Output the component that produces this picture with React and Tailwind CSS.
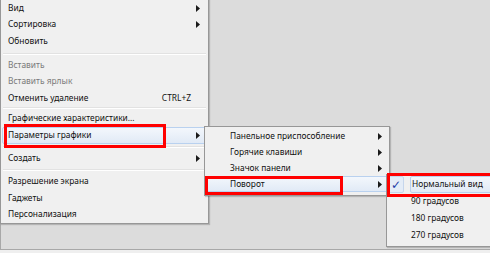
import React from 'react';

const font = { fontFamily: '"Noto Sans", "Open Sans", sans-serif' };

function Arrow() {
  return (
    <svg width="4" height="7" viewBox="0 0 4 7" className="shrink-0">
      <path d="M0 0L4 3.5L0 7Z" fill="#1a1a1a" />
    </svg>
  );
}

function Sep({ h }) {
  return (
    <div className={`${h} flex flex-col justify-center mx-[2px]`}>
      <div className="h-px bg-[#e2e2e2]" />
      <div className="h-px bg-white" />
    </div>
  );
}

function Item({ label, h, disabled, arrow, shortcut, active, pad }) {
  return (
    <div
      className={`${h} flex items-center justify-between rounded-[2px] border ${
        active
          ? 'border-[#b9d1ef] bg-gradient-to-b from-[#f3f7fc] to-[#e1eaf6]'
          : 'border-transparent'
      } ${pad}`}
    >
      <span className={`whitespace-nowrap ${disabled ? 'text-[#7a7a7a]' : 'text-[#111]'}`}>{label}</span>
      {arrow && <Arrow />}
      {shortcut && <span className="text-[#111] mr-[9px]">{shortcut}</span>}
    </div>
  );
}

const mainItems = [
  { label: 'Вид', h: 'h-[16px]', arrow: true },
  { label: 'Сортировка', h: 'h-[17px]', arrow: true },
  { label: 'Обновить', h: 'h-[17px]' },
  { sep: 'h-[7px]' },
  { label: 'Вставить', h: 'h-[16px]', disabled: true },
  { label: 'Вставить ярлык', h: 'h-[17px]', disabled: true },
  { label: 'Отменить удаление', h: 'h-[16px]', shortcut: 'CTRL+Z' },
  { sep: 'h-[4px]' },
  { label: 'Графические характеристики...', h: 'h-[17px]' },
  { label: 'Параметры графики', h: 'h-[17px]', arrow: true, active: true },
  { sep: 'h-[6px]' },
  { label: 'Создать', h: 'h-[16px]', arrow: true },
  { sep: 'h-[7px]' },
  { label: 'Разрешение экрана', h: 'h-[17px]' },
  { label: 'Гаджеты', h: 'h-[16px]' },
  { label: 'Персонализация', h: 'h-[16px]' },
];

const graphItems = [
  { label: 'Панельное приспособление', arrow: true },
  { label: 'Горячие клавиши', arrow: true },
  { label: 'Значок панели', arrow: true },
  { label: 'Поворот', arrow: true, active: true },
];

const rotateItems = ['90 градусов', '180 градусов', '270 градусов'];

export default function App() {
  return (
    <div className="relative w-[490px] h-[253px] overflow-hidden bg-[#efefef] text-[8.4px]" style={font}>
      {/* desktop area */}
      <div className="h-[250px] bg-[#dcdcdc] border-l border-b border-[#a8a8a8]" />

      {/* main context menu */}
      <div className="absolute left-0 top-[-1px] w-[209px] border border-[#979797] bg-[#f0f0f0] pb-[1px] shadow-[1px_1px_1px_rgba(0,0,0,0.18)]">
        {mainItems.map((it, i) =>
          it.sep ? (
            <Sep key={i} h={it.sep} />
          ) : (
            <div key={i} className="mx-[1px]">
              <Item {...it} pad="pl-[5px] pr-[6px]" />
            </div>
          )
        )}
      </div>

      {/* graphics submenu */}
      <div className="absolute left-[204px] top-[126px] w-[186px] border border-[#979797] bg-[#f0f0f0] pt-[1px] pb-[3px] shadow-[1px_1px_1px_rgba(0,0,0,0.18)]">
        {graphItems.map((it, i) => (
          <div key={i} className="mx-[1px]">
            <Item {...it} h="h-[16px]" pad="pl-[23px] pr-[5px]" />
          </div>
        ))}
      </div>

      {/* rotation submenu */}
      <div className="absolute left-[386px] top-[174px] w-[112px] border border-[#979797] bg-[#f0f0f0] pt-[1px] pb-[3px] shadow-[1px_1px_1px_rgba(0,0,0,0.18)]">
        <div className="mx-[1px] h-[17px] flex items-center gap-[6px]">
          <div className="w-[16px] h-[17px] flex items-center justify-center rounded-[2px] border border-[#c6d6ec] bg-[#e4ecf7]">
            <span className="text-[#1d3aa6] text-[12px] leading-none" style={{ fontFamily: '"DejaVu Sans", sans-serif' }}>
              ✓
            </span>
          </div>
          <div className="flex-1 h-[17px] flex items-center pl-[1px] rounded-[2px] border border-[#b9d1ef] bg-gradient-to-b from-[#f3f7fc] to-[#e1eaf6] text-[#111] whitespace-nowrap">
            Нормальный вид
          </div>
        </div>
        {rotateItems.map((t, i) => (
          <div key={t} className={`mx-[1px] ${i === 2 ? 'h-[16px]' : 'h-[17px]'} flex items-center pl-[23px] text-[#111] whitespace-nowrap`}>
            {t}
          </div>
        ))}
      </div>

      {/* red highlight frames */}
      <div className="absolute left-[4px] top-[124px] w-[162px] h-[24px] border-[3px] border-[#ff0000]" />
      <div className="absolute left-[205px] top-[176px] w-[138px] h-[19px] border-[3px] border-[#ff0000]" />
      <div className="absolute left-[387px] top-[173px] w-[110px] h-[24px] border-[3px] border-[#ff0000]" />
    </div>
  );
}
